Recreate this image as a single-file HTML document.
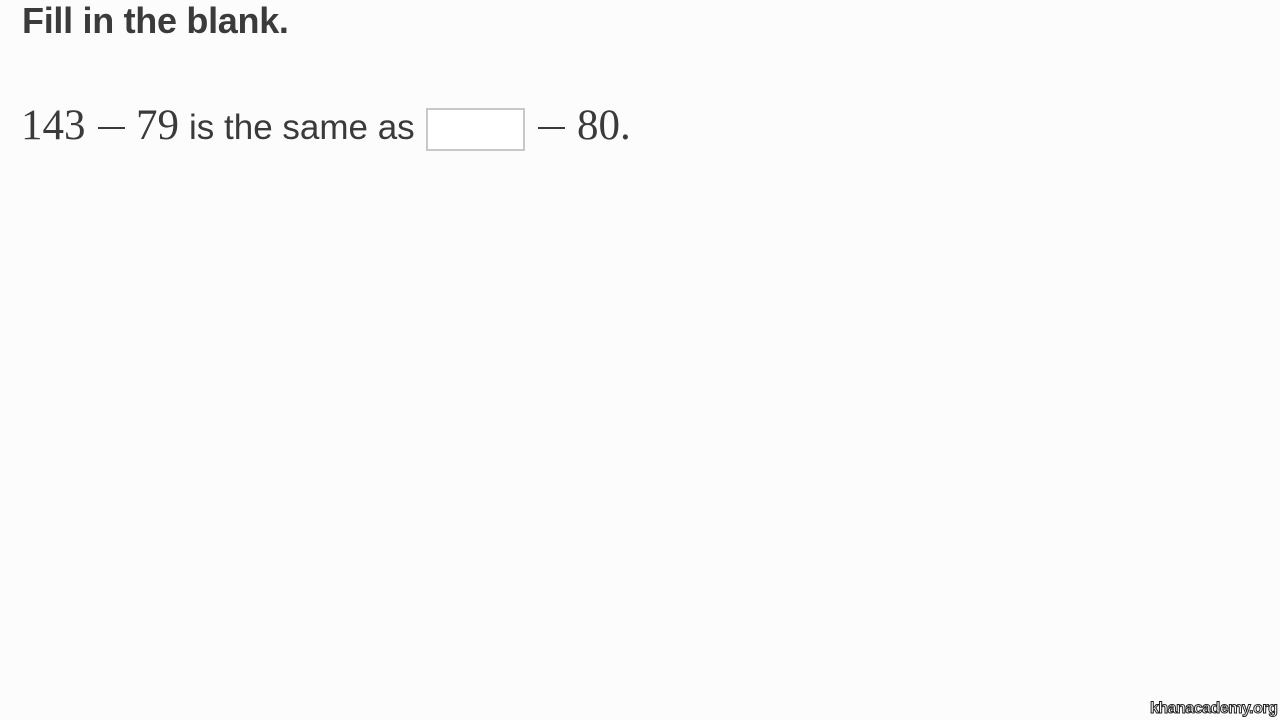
<!DOCTYPE html>
<html><head><style>
body{margin:0;width:1280px;height:720px;background:#fcfcfc;position:relative;overflow:hidden;color:#3a3a3a;font-family:"Liberation Sans",sans-serif}
.t{position:absolute;left:22px;top:0px;font-size:36px;font-weight:bold;color:#3b3b3b;letter-spacing:-0.3px}
.m{position:absolute;white-space:nowrap;line-height:1}
.s{font-family:"Liberation Serif",serif;font-size:43px;color:#3a3a3a;top:104px}
.ss{font-family:"Liberation Sans",sans-serif;font-size:35px;color:#3a3a3a;top:110px}
.mi{position:absolute;height:2px;background:#3a3a3a;top:127px}
.box{position:absolute;left:426px;top:108px;width:95px;height:39px;border:2px solid #c8c8c8;background:#fff}
.w{position:absolute;left:1150px;top:700px;font-size:16px;color:#fff;-webkit-text-stroke:1px #222;font-weight:bold;letter-spacing:-0.5px}
</style></head><body>
<div class="t">Fill in the blank.</div>
<div class="m s" style="left:21px">143</div>
<div class="mi" style="left:98px;width:27px"></div>
<div class="m s" style="left:136px">79</div>
<div class="m ss" style="left:189px">is the same as</div>
<div class="box"></div>
<div class="mi" style="left:538px;width:27px"></div>
<div class="m s" style="left:577px">80.</div>
<div class="w">khanacademy.org</div>
</body></html>
